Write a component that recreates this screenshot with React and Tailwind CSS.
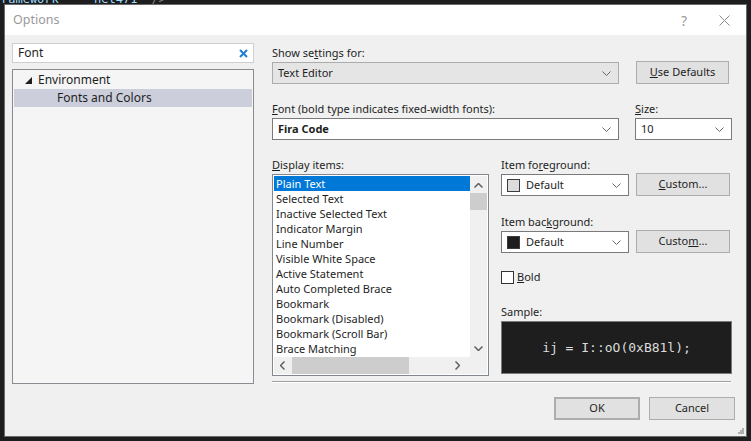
import React from "react";

const items = [
  "Plain Text",
  "Selected Text",
  "Inactive Selected Text",
  "Indicator Margin",
  "Line Number",
  "Visible White Space",
  "Active Statement",
  "Auto Completed Brace",
  "Bookmark",
  "Bookmark (Disabled)",
  "Bookmark (Scroll Bar)",
  "Brace Matching",
];

function Chevron() {
  return (
    <svg width="9" height="5" viewBox="0 0 9 5" className="shrink-0">
      <path d="M0.5 0.5 L4.5 4.5 L8.5 0.5" fill="none" stroke="#666" strokeWidth="1" />
    </svg>
  );
}

function Combo({ className, children }) {
  return (
    <div className={`h-[22px] flex items-center pl-[5px] pr-[7px] border ${className}`}>
      <div className="flex-1 flex items-center gap-[6px] min-w-0">{children}</div>
      <Chevron />
    </div>
  );
}

function Button({ className = "", children }) {
  return (
    <div className={`flex items-center justify-center bg-[#e1e1e1] border border-[#adadad] ${className}`}>
      {children}
    </div>
  );
}

function Label({ children, className = "" }) {
  return <div className={`h-[20px] leading-[22px] ${className}`}>{children}</div>;
}

export default function App() {
  return (
    <div className="relative w-[751px] h-[441px] bg-[#1e1e1e] overflow-hidden font-['Segoe_UI','Noto_Sans',sans-serif] text-[11px] text-[#1e1e1e]">
      <div className="flex gap-[14px] font-['DejaVu_Sans_Mono',monospace] text-[12px] leading-[12px] -mt-[7px] pl-[1px] text-[#9cdcfe]">
        <span>ramework</span>
        <span className="text-[#cccccc]">-</span>
        <span>net471</span>
        <span className="text-[#808080]">/&gt;</span>
      </div>

      {/* dialog window */}
      <div className="absolute left-[4px] top-[4px] w-[743px] h-[433px] bg-[#f0f0f0] border border-[#6b6b6b] flex flex-col">
        <div className="h-[30px] bg-white flex items-center shrink-0">
          <span className="pl-[8px] text-[#9a9a9a] text-[12.5px]">Options</span>
          <span className="ml-auto text-[#9a9a9a] text-[14px] mr-[32px]">?</span>
          <svg width="11" height="11" viewBox="0 0 11 11" className="mr-[16px]">
            <path d="M0.5 0.5 L10.5 10.5 M10.5 0.5 L0.5 10.5" stroke="#8a8a8a" strokeWidth="1" />
          </svg>
        </div>

        <div className="flex flex-1 pl-[7px] pt-[8px]">
          {/* left pane */}
          <div className="w-[242px] flex flex-col">
            <div className="h-[20px] bg-white border border-[#cfcfcf] flex items-center pl-[5px] pr-[5px] text-[12px]">
              <span className="flex-1">Font</span>
              <svg width="9" height="9" viewBox="0 0 9 9">
                <path d="M1 1 L8 8 M8 1 L1 8" stroke="#1e7fd6" strokeWidth="2" />
              </svg>
            </div>
            <div className="mt-[6px] h-[315px] bg-[#f5f5f5] border border-[#8a8a90] p-[1px] text-[12px]">
              <div className="h-[18px] flex items-center">
                <svg width="7" height="7" viewBox="0 0 7 7" className="ml-[11px] mr-[6px]">
                  <polygon points="7,0 7,7 0,7" fill="#1e1e1e" />
                </svg>
                <span>Environment</span>
              </div>
              <div className="h-[18px] flex items-center bg-[#cccedb] pl-[43px]">Fonts and Colors</div>
            </div>
          </div>

          {/* right pane */}
          <div className="ml-[18px] w-[463px] flex flex-col">
            <div className="flex">
              <div className="w-[347px] flex flex-col">
                <Label className="-mt-[1px]">
                  Show se<u>t</u>tings for:
                </Label>
                <Combo className="bg-[#e5e5e5] border-[#acacac]">
                  <span>Text Editor</span>
                </Combo>
              </div>
              <Button className="ml-[17px] mt-[18px] w-[93px] h-[23px]">
                <span><u>U</u>se Defaults</span>
              </Button>
            </div>

            <div className="flex mt-[14px]">
              <div className="w-[347px] flex flex-col">
                <Label>
                  <u>F</u>ont (bold type indicates fixed-width fonts):
                </Label>
                <Combo className="bg-white border-[#7a7a7a]">
                  <span className="font-bold">Fira Code</span>
                </Combo>
              </div>
              <div className="ml-[16px] w-[97px] flex flex-col">
                <Label>
                  <u>S</u>ize:
                </Label>
                <Combo className="bg-white border-[#7a7a7a]">
                  <span>10</span>
                </Combo>
              </div>
            </div>

            <div className="flex mt-[14px]">
              <div className="w-[217px] flex flex-col">
                <Label>
                  <u>D</u>isplay items:
                </Label>
                <div className="h-[202px] bg-white border border-[#828790] p-[1px] flex flex-col">
                  <div className="flex flex-1">
                    <div className="w-[197px] flex flex-col">
                      {items.map((it, i) => (
                        <div
                          key={it}
                          className={`h-[15px] leading-[16px] pl-[2px] whitespace-nowrap ${
                            i === 0 ? "bg-[#0078d7] text-white" : ""
                          }`}
                        >
                          {it}
                        </div>
                      ))}
                    </div>
                    <div className="w-[17px] bg-[#f0f0f0] flex flex-col items-center">
                      <svg width="9" height="5" viewBox="0 0 9 5" className="mt-[7px]">
                        <path d="M0.5 4.5 L4.5 0.5 L8.5 4.5" fill="none" stroke="#606060" strokeWidth="1.5" />
                      </svg>
                      <div className="mt-[5px] w-[17px] h-[17px] bg-[#cdcdcd]" />
                      <svg width="9" height="5" viewBox="0 0 9 5" className="mt-auto mb-[6px]">
                        <path d="M0.5 0.5 L4.5 4.5 L8.5 0.5" fill="none" stroke="#606060" strokeWidth="1.5" />
                      </svg>
                    </div>
                  </div>
                  <div className="h-[17px] bg-[#f0f0f0] flex items-center">
                    <svg width="5" height="9" viewBox="0 0 5 9" className="ml-[6px]">
                      <path d="M4.5 0.5 L0.5 4.5 L4.5 8.5" fill="none" stroke="#606060" strokeWidth="1.5" />
                    </svg>
                    <div className="ml-[7px] w-[117px] h-[17px] bg-[#cdcdcd]" />
                    <svg width="5" height="9" viewBox="0 0 5 9" className="ml-[46px]">
                      <path d="M0.5 0.5 L4.5 4.5 L0.5 8.5" fill="none" stroke="#606060" strokeWidth="1.5" />
                    </svg>
                  </div>
                </div>
              </div>

              <div className="ml-[12px] flex flex-col">
                <div className="flex">
                  <div className="w-[128px] flex flex-col">
                    <Label>
                      Item fo<u>r</u>eground:
                    </Label>
                    <Combo className="bg-white border-[#7a7a7a]">
                      <span className="w-[13px] h-[13px] bg-[#dcdcdc] border border-[#3c3c3c]" />
                      <span>Default</span>
                    </Combo>
                  </div>
                  <Button className="ml-[7px] mt-[19px] w-[94px] h-[23px]">
                    <span><u>C</u>ustom...</span>
                  </Button>
                </div>
                <div className="flex mt-[15px]">
                  <div className="w-[128px] flex flex-col">
                    <Label>
                      Item bac<u>k</u>ground:
                    </Label>
                    <Combo className="bg-white border-[#7a7a7a]">
                      <span className="w-[13px] h-[13px] bg-[#1e1e1e] border border-[#3c3c3c]" />
                      <span>Default</span>
                    </Combo>
                  </div>
                  <Button className="ml-[7px] mt-[19px] w-[94px] h-[23px]">
                    <span>Custo<u>m</u>...</span>
                  </Button>
                </div>
                <div className="flex items-center mt-[17px] h-[14px]">
                  <span className="w-[13px] h-[13px] bg-white border border-[#333]" />
                  <span className="ml-[3px]">
                    <u>B</u>old
                  </span>
                </div>
                <Label className="mt-[17px]">Sample:</Label>
                <div className="w-[231px] h-[53px] bg-[#1e1e1e] border border-[#7a7a7a] flex items-center justify-center">
                  <span className="font-['DejaVu_Sans_Mono',monospace] text-[13px] text-[#dcdcdc] whitespace-pre">
                    ij = I::oO(0xB81l);
                  </span>
                </div>
              </div>
            </div>

            <div className="mt-[5px] w-[459px] h-[1px] bg-[#a0a0a0] border-b border-white box-content" />

            <div className="flex mt-[14px]">
              <Button className="ml-[282px] w-[86px] h-[23px] border-2 border-[#0078d7]">OK</Button>
              <Button className="ml-[9px] w-[86px] h-[23px]">Cancel</Button>
            </div>
          </div>
        </div>

        <svg width="6" height="6" viewBox="0 0 6 6" className="absolute right-[2px] bottom-[2px]">
          <rect x="4" y="0" width="2" height="2" fill="#b0b0b0" />
          <rect x="2" y="2" width="2" height="2" fill="#b0b0b0" />
          <rect x="4" y="2" width="2" height="2" fill="#b0b0b0" />
          <rect x="0" y="4" width="2" height="2" fill="#b0b0b0" />
          <rect x="2" y="4" width="2" height="2" fill="#b0b0b0" />
          <rect x="4" y="4" width="2" height="2" fill="#b0b0b0" />
        </svg>
      </div>
    </div>
  );
}
